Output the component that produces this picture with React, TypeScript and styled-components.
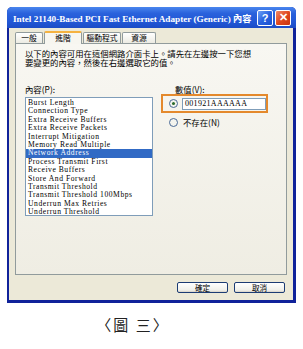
import styled, { createGlobalStyle } from "styled-components";

const GlobalStyle = createGlobalStyle`
  html, body {
    margin: 0;
    background: #ffffff;
  }
  body {
    font-family: "Liberation Serif", "Noto Sans CJK TC", serif;
  }
`;

const Page = styled.div`
  width: 303px;
  height: 349px;
  padding: 7px 0 0 7px;
  box-sizing: border-box;
`;

const Window = styled.div`
  width: 289px;
  height: 296px;
  display: flex;
  flex-direction: column;
  background: #10229a;
  border-radius: 5px 5px 0 0;
  overflow: hidden;
`;

const TitleBar = styled.div`
  height: 21px;
  display: flex;
  align-items: center;
  padding: 0 5px 0 6px;
  gap: 2px;
  background: linear-gradient(#4a86ee 0%, #2a62dc 30%, #2157d6 70%, #1c4cc6 100%);
`;

const Title = styled.div`
  flex: 1;
  color: #ffffff;
  font-weight: bold;
  font-size: 9.2px;
  white-space: nowrap;
  font-family: "Liberation Serif", "Noto Sans CJK TC", serif;
`;

const CaptionButton = styled.div<{ $kind: "help" | "close" }>`
  width: 14px;
  height: 14px;
  border: 1px solid #ffffff;
  border-radius: 2px;
  display: flex;
  align-items: center;
  justify-content: center;
  color: #ffffff;
  font: bold 11px "Liberation Sans", sans-serif;
  background: ${({ $kind }) =>
    $kind === "close"
      ? "linear-gradient(135deg, #f08a6a, #e0491f 50%, #c8320e)"
      : "linear-gradient(135deg, #6fa0f5, #2a63e0 50%, #1a4fcf)"};
`;

const Body = styled.div`
  flex: 1;
  margin: 0 3px 3px 2px;
  background: #ece9d8;
  padding: 4px 6px 0 6px;
  display: flex;
  flex-direction: column;
`;

const TabRow = styled.div`
  display: flex;
  align-items: flex-end;
  height: 11px;
`;

const Tab = styled.div<{ $active?: boolean; $w: number }>`
  width: ${({ $w }) => $w}px;
  height: ${({ $active }) => ($active ? 13 : 11)}px;
  box-sizing: border-box;
  border: 1px solid #919b9c;
  border-bottom: none;
  border-top: ${({ $active }) => ($active ? "2px solid #f5b240" : "1px solid #919b9c")};
  border-radius: 2px 2px 0 0;
  background: ${({ $active }) => ($active ? "#f7f6f0" : "linear-gradient(#ffffff, #ecebe3)")};
  font-family: "Noto Sans CJK TC", sans-serif;
  font-size: 7.8px;
  line-height: 9px;
  white-space: nowrap;
  text-align: center;
  color: #000;
  margin-bottom: ${({ $active }) => ($active ? "-1px" : "0")};
  margin-right: 1px;
  position: relative;
  z-index: ${({ $active }) => ($active ? 1 : 0)};
`;

const Panel = styled.div`
  height: 232px;
  border: 1px solid #919b9c;
  background: linear-gradient(#f8f7f2, #efede3);
  padding: 5px 9px 0 9px;
  box-sizing: border-box;
  display: flex;
  flex-direction: column;
`;

const Intro = styled.div`
  font-family: "Noto Sans CJK TC", sans-serif;
  font-size: 8.4px;
  line-height: 9px;
  color: #000;
  white-space: nowrap;
`;

const Columns = styled.div`
  display: flex;
  margin-top: 18px;
  gap: 8px;
`;

const LeftCol = styled.div`
  width: 128px;
  display: flex;
  flex-direction: column;
`;

const RightCol = styled.div`
  display: flex;
  flex-direction: column;
`;

const FieldLabel = styled.div<{ $indent?: number }>`
  font-family: "Noto Sans CJK TC", sans-serif;
  font-size: 8.4px;
  line-height: 9px;
  height: 10px;
  padding-left: ${({ $indent }) => $indent ?? 0}px;
  color: #000;
`;

const ListBox = styled.div`
  margin-top: 2px;
  height: 119px;
  box-sizing: border-box;
  border: 1px solid #7f9db9;
  background: #ffffff;
  padding: 1px 0;
`;

const ListItem = styled.div<{ $selected?: boolean }>`
  height: 8.4px;
  line-height: 8.4px;
  font-size: 7.6px;
  letter-spacing: 0.55px;
  padding-left: 2px;
  white-space: nowrap;
  color: ${({ $selected }) => ($selected ? "#ffffff" : "#000000")};
  background: ${({ $selected }) => ($selected ? "#316ac5" : "transparent")};
`;

const Highlight = styled.div`
  margin-top: -1px;
  width: 107px;
  height: 19px;
  box-sizing: border-box;
  border: 2px solid #e4892c;
  display: flex;
  align-items: center;
  padding-left: 6px;
  gap: 4px;
`;

const Radio = styled.div<{ $checked?: boolean }>`
  width: 7px;
  height: 7px;
  border-radius: 50%;
  border: 1px solid #4a6a96;
  background: #f4f4ee;
  display: flex;
  align-items: center;
  justify-content: center;
  flex: none;
  &::after {
    content: "";
    width: 3px;
    height: 3px;
    border-radius: 50%;
    background: ${({ $checked }) => ($checked ? "#2a6a2a" : "transparent")};
  }
`;

const TextInput = styled.div`
  width: 87px;
  height: 12px;
  box-sizing: border-box;
  border: 1px solid #7f9db9;
  background: #ffffff;
  font-size: 8px;
  letter-spacing: 0.3px;
  line-height: 10px;
  padding-left: 2px;
  color: #000;
`;

const RadioRow = styled.div`
  display: flex;
  align-items: center;
  gap: 5px;
  margin-top: 5px;
  padding-left: 8px;
`;

const RadioLabel = styled.span`
  font-family: "Noto Sans CJK TC", sans-serif;
  font-size: 8.4px;
  line-height: 9px;
`;

const Footer = styled.div`
  display: flex;
  justify-content: flex-end;
  gap: 6px;
  padding: 7px 2px 0 0;
`;

const Button = styled.div`
  width: 51px;
  height: 11px;
  box-sizing: border-box;
  border: 1px solid #1c3c74;
  border-radius: 2px;
  background: linear-gradient(#ffffff, #f0f0ea 80%, #d6d0c5);
  font-family: "Noto Sans CJK TC", sans-serif;
  font-size: 7.6px;
  line-height: 9px;
  text-align: center;
  color: #000;
`;

const Caption = styled.div`
  width: 252px;
  margin-top: 13px;
  text-align: center;
  font-family: "Noto Sans CJK TC", sans-serif;
  font-size: 15px;
  letter-spacing: 2px;
  line-height: 18px;
  color: #222;
`;

const items = [
  "Burst Length",
  "Connection Type",
  "Extra Receive Buffers",
  "Extra Receive Packets",
  "Interrupt Mitigation",
  "Memory Read Multiple",
  "Network Address",
  "Process Transmit First",
  "Receive Buffers",
  "Store And Forward",
  "Transmit Threshold",
  "Transmit Threshold 100Mbps",
  "Underrun Max Retries",
  "Underrun Threshold",
];

export default function App() {
  return (
    <Page>
      <GlobalStyle />
      <Window>
        <TitleBar>
          <Title>Intel 21140-Based PCI Fast Ethernet Adapter (Generic) 內容</Title>
          <CaptionButton $kind="help">?</CaptionButton>
          <CaptionButton $kind="close">✕</CaptionButton>
        </TitleBar>
        <Body>
          <TabRow>
            <Tab $w={28}>一般</Tab>
            <Tab $w={38} $active>
              進階
            </Tab>
            <Tab $w={38}>驅動程式</Tab>
            <Tab $w={34}>資源</Tab>
          </TabRow>
          <Panel>
            <Intro>
              以下的內容可用在這個網路介面卡上。請先在左邊按一下您想
              <br />
              要變更的內容，然後在右邊選取它的值。
            </Intro>
            <Columns>
              <LeftCol>
                <FieldLabel>內容(P):</FieldLabel>
                <ListBox>
                  {items.map((it) => (
                    <ListItem key={it} $selected={it === "Network Address"}>
                      {it}
                    </ListItem>
                  ))}
                </ListBox>
              </LeftCol>
              <RightCol>
                <FieldLabel $indent={14}>數值(V):</FieldLabel>
                <Highlight>
                  <Radio $checked />
                  <TextInput>001921AAAAAA</TextInput>
                </Highlight>
                <RadioRow>
                  <Radio />
                  <RadioLabel>不存在(N)</RadioLabel>
                </RadioRow>
              </RightCol>
            </Columns>
          </Panel>
          <Footer>
            <Button>確定</Button>
            <Button>取消</Button>
          </Footer>
        </Body>
      </Window>
      <Caption>〈圖 三〉</Caption>
    </Page>
  );
}
